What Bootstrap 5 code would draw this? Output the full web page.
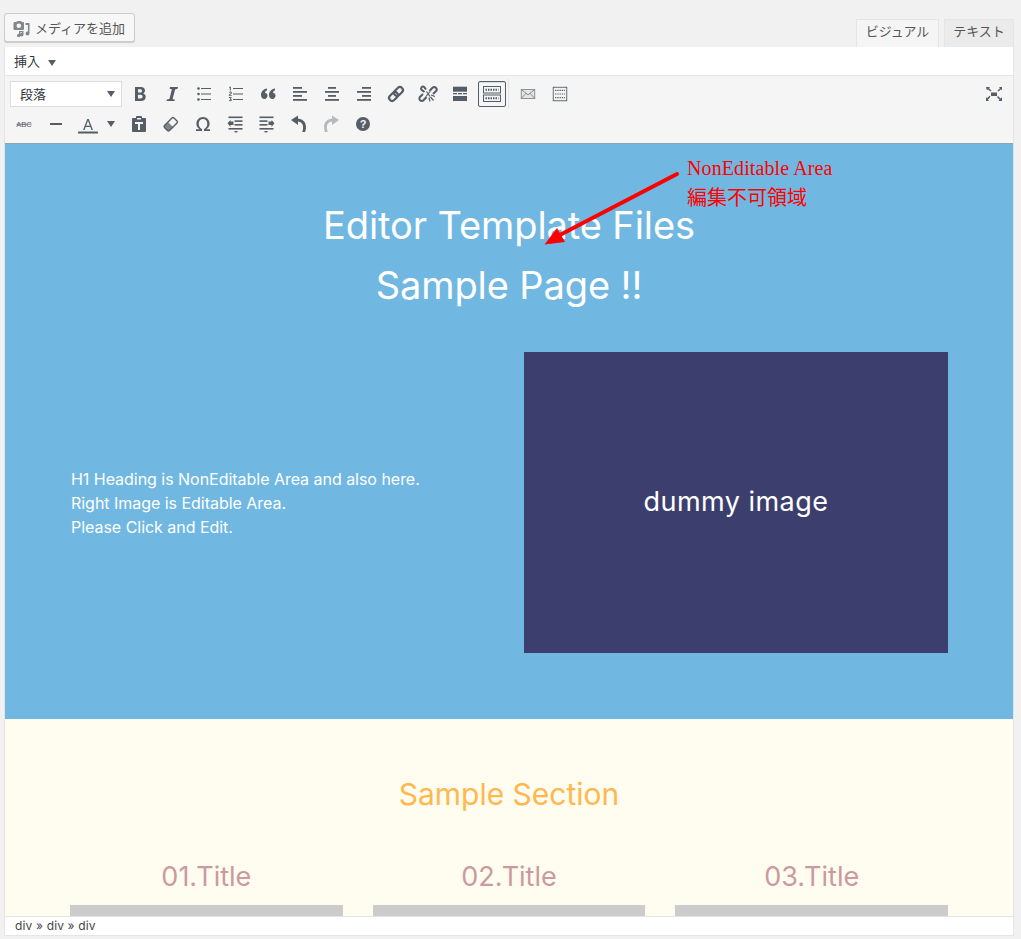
<!DOCTYPE html>
<html lang="ja">
<head>
  <meta charset="UTF-8" />
  <title>Editor</title>
  <meta name="viewport" content="width=device-width, initial-scale=1" />
  <link href="https://cdn.jsdelivr.net/npm/bootstrap@5.3.0/dist/css/bootstrap.min.css" rel="stylesheet" />
  <style>
    body {
      background: #f1f1f1;
      font-family: "Inter", "Noto Sans CJK JP", sans-serif;
      height: 939px;
      overflow: hidden;
    }
    .wp-wrap { padding: 13px 7px 0 4px; }
    .wp-top { height: 34px; }
    .media-btn {
      height: 29px;
      width: 131px;
      padding: 0 0 0 8px;
      background: #f7f7f7;
      border: 1px solid #ccc;
      border-radius: 3px;
      box-shadow: 0 1px 0 #ccc;
      color: #555;
      font-size: 13px;
      font-family: "Noto Sans CJK JP", sans-serif;
    }
    .wp-tab {
      height: 28px;
      margin-top: 6px;
      border: 1px solid #e5e5e5;
      border-bottom: 0;
      background: #ebebeb;
      color: #555;
      font-size: 13px;
      font-family: "Noto Sans CJK JP", sans-serif;
      line-height: 22px;
      text-align: center;
    }
    .wp-tab.on { background: #f5f5f5; width: 83px; margin-right: 5px; }
    .wp-tab.off { width: 70px; }
    .wp-editor { border: 1px solid #e5e5e5; border-top: 0; border-bottom: 0; }
    .menu-bar {
      height: 29px;
      background: #fff;
      border-bottom: 1px solid #e5e5e5;
      padding: 0 9px;
      font-size: 13px;
      color: #32373c;
      font-family: "Noto Sans CJK JP", sans-serif;
    }
    .caret-dn {
      display: inline-block;
      border-top: 6px solid #555d66;
      border-left: 4px solid transparent;
      border-right: 4px solid transparent;
    }
    .menu-bar .caret-dn { margin-top: 3px; }
    .tool-bar { height: 68px; background: #f5f5f5; border-bottom: 1px solid #8fa3b0; padding: 3px 0 0 3px; }
    .tool-row { height: 30px; }
    .fmt-select {
      width: 112px;
      height: 26px;
      background: #fff;
      border: 1px solid #ddd;
      font-size: 13px;
      color: #32373c;
      padding: 0 6px 0 9px;
      margin: 0 2px;
      font-family: "Noto Sans CJK JP", sans-serif;
    }
    .tb {
      width: 32px;
      height: 30px;
      flex: none;
      color: #555d66;
    }
    .tb svg { display: block; }
    .tb.active > span {
      width: 28px;
      height: 26px;
      border: 1px solid #555d66;
      border-radius: 2px;
      background: #f3f5f6;
      box-shadow: inset 0 1px 0 #ddd;
    }
    .tb.off { color: #b6babd; }
    .tb-sep { width: 1px; height: 30px; background: #e5e5e5; margin: 0 3px 0 0; }
    .tb-color { width: 51px; }
    .tb-color .a-wrap { width: 32px; }
    .tb-color .caret-dn { margin-left: 3px; }
    .tb-full { margin-right: 3px; }
    .edit-area { height: 772px; overflow: hidden; }
    .hero {
      height: 575px;
      background: #70b8e2;
      color: #fff;
      padding: 51px 65px 0;
    }
    .hero h1 {
      font-family: "Inter", sans-serif;
      font-size: 38px;
      line-height: 60px;
      font-weight: 400;
      text-align: center;
      margin: 0;
      letter-spacing: -.1px;
    }
    .hero-row { margin-top: 37px; height: 301px; gap: 30px; }
    .hero-txt { width: 424px; font-size: 16px; line-height: 24px; padding-left: 1px; letter-spacing: -.03px; }
    .dummy-img {
      width: 424px;
      height: 301px;
      background: #3c3f6d;
      font-size: 27px;
      letter-spacing: .45px;
    }
    .note-red {
      position: absolute;
      left: 682px;
      top: 10px;
      color: #f00;
      font-size: 20px;
      line-height: 29px;
      white-space: nowrap;
    }
    .note-red .en { font-family: "Liberation Serif", serif; letter-spacing: .1px; }
    .note-red .jp { font-family: "Noto Sans CJK JP", sans-serif; margin-top: -1px; }
    .note-arrow { position: absolute; left: 0; top: 0; }
    .sect {
      height: 197px;
      background: #fffcf0;
      padding: 51px 65px 0;
    }
    .sect h2 {
      font-family: "Inter", sans-serif;
      font-size: 30px;
      line-height: 48px;
      font-weight: 400;
      color: #ffb84d;
      text-align: center;
      margin: 0 0 42px;
    }
    .sect-row { gap: 30px; }
    .sect-col { flex: 1 1 0; min-width: 0; }
    .sect-col h3 {
      font-family: "Inter", sans-serif;
      font-size: 27px;
      line-height: 34px;
      font-weight: 400;
      color: #cb9a9f;
      text-align: center;
      margin: 0 0 11px;
    }
    .gray-box { height: 200px; background: #ccc; }
    .status-bar {
      height: 20px;
      background: #fff;
      border-top: 1px solid #e5e5e5;
      border-bottom: 1px solid #e5e5e5;
      padding: 0 10px;
      font-size: 12px;
      line-height: 18px;
      letter-spacing: .15px;
      color: #444;
    }
  </style>
</head>
<body>
  <div class="wp-wrap">
    <div class="wp-top d-flex justify-content-between align-items-start">
      <button type="button" class="media-btn d-flex align-items-center gap-1">
        <svg width="18" height="18" viewBox="0 0 18 18" fill="#82878c"><path fill-rule="evenodd" d="M1.500 3H3.500L4.500 2H8L9 3h1a1 1 0 0 1 1 1v6a1 1 0 0 1-1 1H1.500a1 1 0 0 1-1-1V4a1 1 0 0 1 1-1zM5.800 4.500a2.300 2.300 0 1 0 0 4.600 2.300 2.300 0 0 0 0-4.600z"/><path d="M12.500 4h4v10.500a2 2 0 1 1-1.600-2V6h-2.400z"/><path d="M6 12h4.500v3.800a1.700 1.700 0 1 1-1.400-1.700V13.200H7.400v3.300a1.700 1.700 0 1 1-1.400-1.700z"/></svg>
        <span>メディアを追加</span>
      </button>
      <div class="d-flex">
        <div class="wp-tab on">ビジュアル</div>
        <div class="wp-tab off">テキスト</div>
      </div>
    </div>
    <div class="wp-editor">
      <div class="menu-bar d-flex align-items-center gap-2">
        <span>挿入</span><span class="caret-dn"></span>
      </div>
      <div class="tool-bar">
        <div class="tool-row d-flex align-items-center">
          <div class="fmt-select d-flex align-items-center justify-content-between"><span>段落</span><span class="caret-dn"></span></div>
          <span class="tb d-flex align-items-center justify-content-center"><svg width="20" height="20" viewBox="0 0 20 20" fill="currentColor"><path fill-rule="evenodd" d="M5 3h6c2.500 0 4 1.300 4 3.500 0 1.400-.8 2.400-1.800 2.900 1.500.4 2.500 1.600 2.500 3.300 0 2.700-1.900 4.300-4.700 4.300H5zm3 2.300v3.200h2.300c1.100 0 1.700-.6 1.700-1.600s-.6-1.600-1.700-1.600zm0 5.400v3.800h2.500c1.300 0 2.100-.7 2.100-1.900s-.8-1.900-2.100-1.900z"/></svg></span>
          <span class="tb d-flex align-items-center justify-content-center"><svg width="20" height="20" viewBox="0 0 20 20" fill="currentColor"><path d="M8 3h8l-.4 1.800-2.500.6L10.600 15l2.300.7-.4 1.300H4.500l.4-1.500 2.500-.6L9.900 5.300 7.600 4.700z"/></svg></span>
          <span class="tb d-flex align-items-center justify-content-center"><svg width="20" height="20" viewBox="0 0 20 20" fill="currentColor"><circle cx="4.500" cy="4.500" r="1.300"/><circle cx="4.500" cy="10" r="1.300"/><circle cx="4.500" cy="15.500" r="1.300"/><rect x="7" y="4" width="10" height="1"/><rect x="7" y="9.500" width="10" height="1"/><rect x="7" y="15" width="10" height="1"/></svg></span>
          <span class="tb d-flex align-items-center justify-content-center"><svg width="20" height="20" viewBox="0 0 20 20" fill="currentColor"><path d="M3 3.200l1.200-.7h.6v4H3.800V3.600l-.8.400z"/><path d="M2.800 8.500c.2-.6.800-1 1.500-1 .9 0 1.500.5 1.500 1.200 0 1-1 1.500-1.700 2.300h1.700v.8H2.800v-.8c.8-1 1.900-1.600 1.900-2.200 0-.3-.2-.5-.5-.5s-.5.200-.6.500z"/><path d="M2.900 13h2.700v.7l-1 1c.7.100 1.200.500 1.200 1.200 0 .8-.7 1.300-1.600 1.300-.6 0-1.200-.2-1.500-.7l.6-.5c.2.300.5.400.8.400s.6-.2.600-.5-.3-.5-.9-.5v-.6l.9-.9H2.900z"/><rect x="7" y="4" width="10" height="1"/><rect x="7" y="9.500" width="10" height="1"/><rect x="7" y="15" width="10" height="1"/></svg></span>
          <span class="tb d-flex align-items-center justify-content-center"><svg width="20" height="20" viewBox="0 0 20 20" fill="currentColor"><path d="M9 4.500v1.700C7.500 6.700 7 7.800 7 9c1.500-.2 2.500.9 2.500 2.400S8.400 15 6.600 15C4.500 15 3 13.500 3 11c0-3.300 2.200-5.800 6-6.500zM17 4.500v1.700c-1.500.5-2 1.600-2 2.800 1.500-.2 2.500.9 2.500 2.400S16.400 15 14.600 15C12.500 15 11 13.500 11 11c0-3.300 2.200-5.800 6-6.500z"/></svg></span>
          <span class="tb d-flex align-items-center justify-content-center"><svg width="20" height="20" viewBox="0 0 20 20" fill="currentColor"><rect x="3" y="3" width="9" height="1.800"/><rect x="3" y="7" width="14" height="1.800"/><rect x="3" y="11" width="9" height="1.800"/><rect x="3" y="15" width="14" height="1.800"/></svg></span>
          <span class="tb d-flex align-items-center justify-content-center"><svg width="20" height="20" viewBox="0 0 20 20" fill="currentColor"><rect x="6" y="3" width="8" height="1.800"/><rect x="3" y="7" width="14" height="1.800"/><rect x="6" y="11" width="8" height="1.800"/><rect x="3" y="15" width="14" height="1.800"/></svg></span>
          <span class="tb d-flex align-items-center justify-content-center"><svg width="20" height="20" viewBox="0 0 20 20" fill="currentColor"><rect x="8" y="3" width="9" height="1.800"/><rect x="3" y="7" width="14" height="1.800"/><rect x="8" y="11" width="9" height="1.800"/><rect x="3" y="15" width="14" height="1.800"/></svg></span>
          <span class="tb d-flex align-items-center justify-content-center"><svg width="20" height="20" viewBox="0 0 20 20" fill="none" stroke="currentColor" stroke-width="2.200"><g transform="rotate(-45 10 10)"><rect x="1.500" y="7" width="10" height="6" rx="3"/><rect x="8.500" y="7" width="10" height="6" rx="3"/></g></svg></span>
          <span class="tb d-flex align-items-center justify-content-center"><svg width="20" height="20" viewBox="0 0 20 20" fill="none" stroke="currentColor" stroke-width="2"><path d="M11.500 7 14.500 3.800a2.400 2.400 0 0 1 3.400 3.400L15 10"/><path d="M8.500 13 5.500 16.200a2.400 2.400 0 0 1-3.400-3.400L5 10"/><path d="M6.500 8 3.300 5.500A2 2 0 0 1 6 2.800l2 2.700"/><path d="M8.500 7.500l3.500 5M12 7.500l-4 5M13 11l4 1.500M12.500 13l3 3.500M11 13.500l1 4" stroke-width="1.200"/></svg></span>
          <span class="tb d-flex align-items-center justify-content-center"><svg width="20" height="20" viewBox="0 0 20 20" fill="currentColor"><rect x="3" y="2.700" width="14" height="5"/><rect x="3" y="9" width="4" height="1.300"/><rect x="8" y="9" width="4" height="1.300"/><rect x="13" y="9" width="4" height="1.300"/><rect x="3" y="12" width="14" height="5"/></svg></span>
          <span class="tb active d-flex align-items-center justify-content-center"><span class="d-flex align-items-center justify-content-center"><svg width="20" height="20" viewBox="0 0 20 20" fill="none" stroke="currentColor"><rect x="1.500" y="2.500" width="17" height="6.500"/><rect x="1.500" y="11" width="17" height="6.500"/><path d="M3.500 5.700h13M3.500 14.200h13" stroke-width="2" stroke-dasharray="1.500 1"/></svg></span></span>
          <span class="tb-sep"></span>
          <span class="tb d-flex align-items-center justify-content-center"><svg width="18" height="18" viewBox="0 0 20 20" fill="#e4e4e4" stroke="#82878c"><rect x="2.500" y="5" width="15" height="10"/><path d="M2.500 5 10 11l7.500-6M2.500 15l5.500-6M17.500 15 12 9" fill="none"/></svg></span>
          <span class="tb d-flex align-items-center justify-content-center"><svg width="18" height="18" viewBox="0 0 20 20" fill="none" stroke="currentColor"><rect x="2.500" y="2.500" width="15" height="15"/><path d="M4.500 6h11M4.500 10h11M4.500 14h11" stroke-dasharray="1.500 1" stroke-width="1.300"/></svg></span>
          <span class="tb tb-full d-flex align-items-center justify-content-center ms-auto"><svg width="20" height="20" viewBox="0 0 20 20" fill="currentColor"><rect x="7" y="8.500" width="6" height="3.500"/><path d="M2 3h4L5 4.200 7.500 6.500 6.500 7.500 4 5.300 3 6.500zM18 3v3.500l-1-1.200-2.500 2.200-1-1L16 4.200 15 3zM2 17v-4l1 1.200 2.500-2.400 1 1L4 15.800 5 17zM18 17h-3.500l1-1.200-2.500-2.800 1-1 2.500 2.600 1.500-1.300z"/></svg></span>
        </div>
        <div class="tool-row d-flex align-items-center">
          <span class="tb d-flex align-items-center justify-content-center"><svg width="20" height="20" viewBox="0 0 20 20" fill="currentColor"><text x="10" y="12.800" font-size="7.500" font-family="Liberation Sans, sans-serif" text-anchor="middle">ABC</text><rect x="2.500" y="9.800" width="15" height=".7"/></svg></span>
          <span class="tb d-flex align-items-center justify-content-center"><svg width="20" height="20" viewBox="0 0 20 20" fill="currentColor"><rect x="4" y="9" width="12" height="2"/></svg></span>
          <span class="tb tb-color d-flex align-items-center"><span class="a-wrap d-flex justify-content-center"><svg width="20" height="22" viewBox="0 0 20 22" fill="currentColor"><path d="M9.300 6h1.400L15 17h-1.500l-1.100-3H7.600l-1.100 3H5zm.7 1.800L8.100 12.700h3.800z"/><rect x="0" y="18.500" width="20" height="2"/></svg></span><span class="caret-dn"></span></span>
          <span class="tb d-flex align-items-center justify-content-center"><svg width="20" height="20" viewBox="0 0 20 20" fill="currentColor"><path fill-rule="evenodd" d="M4 4h3V3a1 1 0 0 1 1-1h4a1 1 0 0 1 1 1v1h3a1 1 0 0 1 1 1v12a1 1 0 0 1-1 1H4a1 1 0 0 1-1-1V5a1 1 0 0 1 1-1zm4 0v1.500h4V4zM6 8v2h3v6h2v-6h3V8z"/></svg></span>
          <span class="tb d-flex align-items-center justify-content-center"><svg width="20" height="20" viewBox="0 0 20 20" fill="none" stroke="currentColor" stroke-width="1.400"><path d="M3.500 11.500 11 4a1.500 1.500 0 0 1 2 0l3 3a1.500 1.500 0 0 1 0 2l-7.500 7.500a1.500 1.500 0 0 1-2 0l-3-3a1.500 1.500 0 0 1 0-2z"/><path d="M3.500 11.500 7 8l5.500 5.500-4 3a1.500 1.500 0 0 1-2 0l-3-3a1.500 1.500 0 0 1 0-2z" fill="currentColor" stroke="none" opacity=".75"/></svg></span>
          <span class="tb d-flex align-items-center justify-content-center"><svg width="20" height="20" viewBox="0 0 20 20" fill="currentColor"><path d="M3 17v-1.700h3.800C4.700 14 3.400 12 3.400 9.700 3.400 5.900 6.200 3 10 3s6.600 2.900 6.600 6.700c0 2.300-1.300 4.300-3.400 5.600H17V17h-6v-1.900c1.900-.9 3.300-2.800 3.300-5.300C14.300 7 12.500 5 10 5S5.700 7 5.700 9.800c0 2.500 1.400 4.400 3.300 5.300V17z"/></svg></span>
          <span class="tb d-flex align-items-center justify-content-center"><svg width="20" height="20" viewBox="0 0 20 20" fill="currentColor"><rect x="3.500" y="2.500" width="14" height="1.600"/><rect x="9.500" y="6.300" width="8" height="1.600"/><rect x="9.500" y="10" width="8" height="1.600"/><rect x="3.500" y="14" width="14" height="1.600"/><rect x="9.500" y="17" width="3" height="1.400"/><path d="M8.500 7.500v3.400H5.500v2L2.500 9.200l3-3.200v1.500z"/></svg></span>
          <span class="tb d-flex align-items-center justify-content-center"><svg width="20" height="20" viewBox="0 0 20 20" fill="currentColor"><rect x="2.500" y="2.500" width="14" height="1.600"/><rect x="2.500" y="6.300" width="8" height="1.600"/><rect x="2.500" y="10" width="8" height="1.600"/><rect x="2.500" y="14" width="14" height="1.600"/><rect x="7.500" y="17" width="3" height="1.400"/><path d="M11.500 7.500v3.400h3v2l3-3.700-3-3.200v1.500z"/></svg></span>
          <span class="tb d-flex align-items-center justify-content-center"><svg width="20" height="20" viewBox="0 0 20 20" fill="currentColor"><path d="M9 1.500v9.500L2 6z"/><path d="M8 4.500c5.500 0 9 3.500 9 8.500 0 2-.4 3.600-1 5h-2.800c.6-1.400.9-3 .9-4.800 0-3.600-2.400-5.700-6.100-5.700z"/></svg></span>
          <span class="tb off d-flex align-items-center justify-content-center"><svg width="20" height="20" viewBox="0 0 20 20" fill="currentColor"><path d="M11 1.500v9.500L18 6z"/><path d="M12 4.500c-5.500 0-9 3.500-9 8.500 0 2 .4 3.600 1 5h2.800c-.6-1.400-.9-3-.9-4.800 0-3.600 2.400-5.700 6.100-5.700z"/></svg></span>
          <span class="tb d-flex align-items-center justify-content-center"><svg width="20" height="20" viewBox="0 0 20 20"><circle cx="10" cy="10" r="7" fill="currentColor"/><text x="10" y="14" font-size="11" font-weight="700" font-family="Liberation Sans, sans-serif" fill="#f5f5f5" text-anchor="middle">?</text></svg></span>
        </div>
      </div>
      <div class="edit-area position-relative">
        <div class="hero">
          <h1>Editor Template Files</h1>
          <h1>Sample Page !!</h1>
          <div class="hero-row d-flex">
            <div class="hero-txt d-flex align-items-center">
              <div>H1 Heading is NonEditable Area and also here.<br />Right Image is Editable Area.<br />Please Click and Edit.</div>
            </div>
            <div class="dummy-img d-flex align-items-center justify-content-center">dummy image</div>
          </div>
        </div>
        <div class="sect">
          <h2>Sample Section</h2>
          <div class="sect-row d-flex">
            <div class="sect-col"><h3>01.Title</h3><div class="gray-box"></div></div>
            <div class="sect-col"><h3>02.Title</h3><div class="gray-box"></div></div>
            <div class="sect-col"><h3>03.Title</h3><div class="gray-box"></div></div>
          </div>
        </div>
        <svg class="note-arrow" width="1009" height="120" viewBox="5 144 1009 120"><path d="M677 174 556 237" stroke="#f00" stroke-width="4" stroke-linecap="round"/><path d="M544.500 244.500 557 228 565 242z" fill="#f00"/></svg>
        <div class="note-red"><div class="en">NonEditable Area</div><div class="jp">編集不可領域</div></div>
      </div>
      <div class="status-bar">div » div » div</div>
    </div>
  </div>
</body>
</html>
